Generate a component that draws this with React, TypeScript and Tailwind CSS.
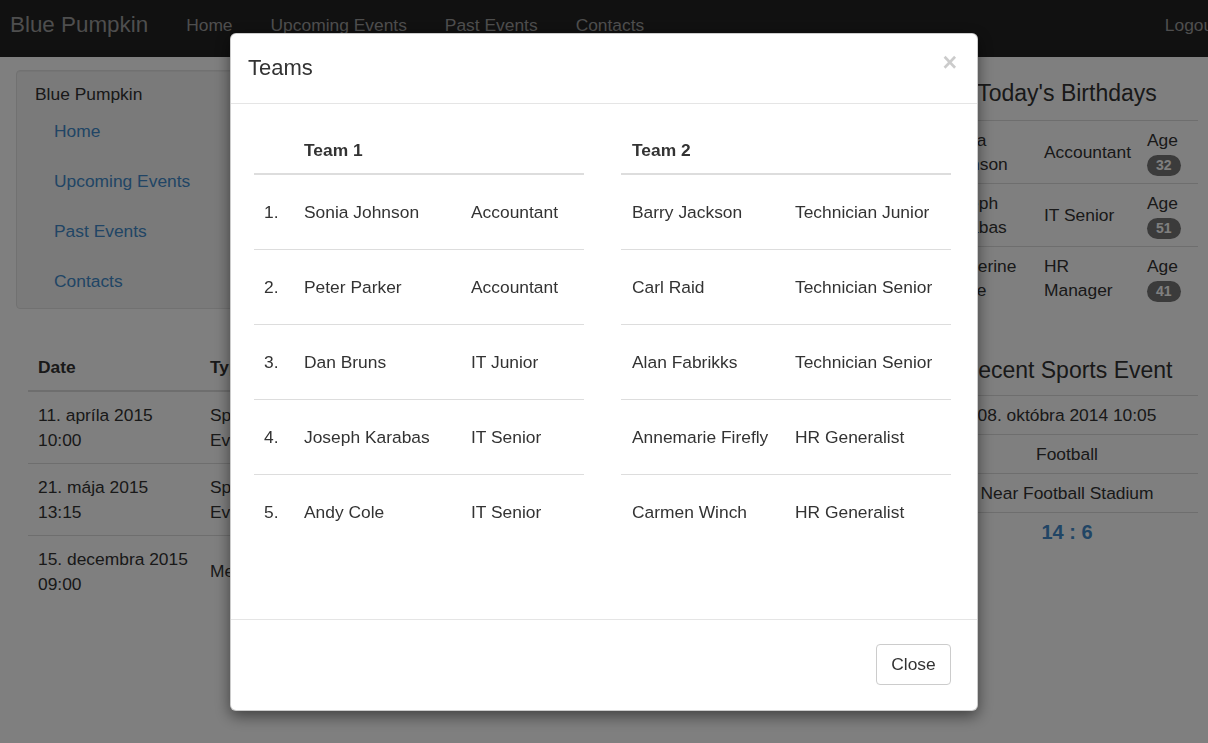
import React from "react";

const team1 = [
  { name: "Sonia Johnson", role: "Accountant" },
  { name: "Peter Parker", role: "Accountant" },
  { name: "Dan Bruns", role: "IT Junior" },
  { name: "Joseph Karabas", role: "IT Senior" },
  { name: "Andy Cole", role: "IT Senior" },
];

const team2 = [
  { name: "Barry Jackson", role: "Technician Junior" },
  { name: "Carl Raid", role: "Technician Senior" },
  { name: "Alan Fabrikks", role: "Technician Senior" },
  { name: "Annemarie Firefly", role: "HR Generalist" },
  { name: "Carmen Winch", role: "HR Generalist" },
];

const events = [
  { date: "11. apríla 2015", time: "10:00", type: "Sports Event" },
  { date: "21. mája 2015", time: "13:15", type: "Sports Event" },
  { date: "15. decembra 2015", time: "09:00", type: "Meeting" },
];

const birthdays = [
  { name: "Sonia Johnson", role: "Accountant", age: 32 },
  { name: "Joseph Karabas", role: "IT Senior", age: 51 },
  { name: "Katherine White", role: "HR Manager", age: 41 },
];

function Navbar() {
  return (
    <div className="flex h-[57px] items-start overflow-hidden bg-[#222] pt-[12px] text-[#9d9d9d]">
      <span className="ml-[10px] text-[22.4px] leading-[26px]">Blue Pumpkin</span>
      <nav className="ml-[38px] flex gap-[38px] pt-[1px] text-[17.4px] leading-[24px]">
        <a>Home</a>
        <a>Upcoming Events</a>
        <a>Past Events</a>
        <a>Contacts</a>
      </nav>
      <a className="ml-auto -mr-[10px] whitespace-nowrap pt-[1px] text-[17.4px] leading-[24px]">
        Logout
      </a>
    </div>
  );
}

function LeftColumn() {
  return (
    <div className="w-[600px] shrink-0">
      <div className="ml-[16px] mt-[13px] h-[239px] rounded-[4px] border border-[#e3e3e3] bg-[#f5f5f5] pt-[11px] shadow-[inset_0_1px_1px_rgba(0,0,0,0.05)]">
        <div className="pl-[18px] leading-[24px]">Blue Pumpkin</div>
        <ul className="pl-[37px] text-[#428bca]">
          {["Home", "Upcoming Events", "Past Events", "Contacts"].map((l) => (
            <li key={l} className="flex h-[50px] items-center">
              {l}
            </li>
          ))}
        </ul>
      </div>

      {/* events table — mostly covered by the modal */}
      <div className="ml-[28px] mt-[35px] w-[300px]">
        <div className="grid h-[48px] grid-cols-[172px_1fr] items-center border-b-2 border-[#ddd] font-bold">
          <span className="pl-[10px]">Date</span>
          <span className="pl-[10px]">Type</span>
        </div>
        {events.map((e, i) => (
          <div
            key={e.date}
            className={`grid grid-cols-[172px_1fr] items-center ${
              i === 0 ? "h-[71px]" : "h-[72px] border-t border-[#ddd]"
            }`}
          >
            <span className="pl-[10px]">
              {e.date}
              <br />
              {e.time}
            </span>
            <span className="w-[80px] pl-[10px]">{e.type}</span>
          </div>
        ))}
      </div>
    </div>
  );
}

function RightColumn() {
  return (
    <div className="ml-auto mr-[10px] w-[262px] shrink-0">
      <h3 className="pb-[14px] pt-[23px] text-center text-[23px] leading-[26px]">
        Today's Birthdays
      </h3>
      {birthdays.map((b) => (
        <div
          key={b.name}
          className="grid h-[63px] grid-cols-[100px_103px_59px] items-center border-t border-[#ddd]"
        >
          <span className="px-[6px]">{b.name}</span>
          <span className="px-[8px]">{b.role}</span>
          <span className="px-[8px]">
            Age
            <br />
            <span className="inline-flex h-[21px] items-center rounded-full bg-[#777] px-[9px] text-[14px] font-bold leading-none text-white">
              {b.age}
            </span>
          </span>
        </div>
      ))}

      <h3 className="pb-[12px] pt-[48px] text-center text-[23px] leading-[26px]">
        Recent Sports Event
      </h3>
      {["08. októbra 2014 10:05", "Football", "Near Football Stadium"].map((t) => (
        <div key={t} className="flex h-[39px] items-center justify-center border-t border-[#ddd]">
          {t}
        </div>
      ))}
      <div className="flex h-[39px] items-center justify-center border-t border-[#ddd] text-[20px] font-bold text-[#428bca]">
        14 : 6
      </div>
    </div>
  );
}

function TeamTable({
  title,
  rows,
  numbered,
}: {
  title: string;
  rows: { name: string; role: string }[];
  numbered: boolean;
}) {
  const cols = numbered ? "grid-cols-[40px_167px_123px]" : "grid-cols-[164px_166px]";
  return (
    <div className="w-[330px]">
      <div className={`grid h-[48px] items-center border-b-2 border-[#ddd] font-bold ${cols}`}>
        {numbered && <span />}
        <span className={numbered ? "pl-[10px]" : "pl-[11px]"}>{title}</span>
        <span />
      </div>
      {rows.map((r, i) => (
        <div
          key={r.name}
          className={`grid items-center ${cols} ${
            i === 0 ? "h-[74px]" : "h-[75px] border-t border-[#ddd]"
          }`}
        >
          {numbered && <span className="pl-[10px]">{i + 1}.</span>}
          <span className={numbered ? "pl-[10px]" : "pl-[11px]"}>{r.name}</span>
          <span className="pl-[10px]">{r.role}</span>
        </div>
      ))}
    </div>
  );
}

function TeamsModal() {
  return (
    <div className="fixed inset-0 bg-black/50">
      <div className="mx-auto mt-[33px] w-[748px] rounded-[6px] border border-black/20 bg-white shadow-[0_5px_15px_rgba(0,0,0,0.5)]">
        <div className="flex h-[70px] items-center justify-between border-b border-[#e5e5e5] pl-[17px] pr-[20px]">
          <h4 className="-mt-[2px] text-[22px] leading-[26px]">Teams</h4>
          <button className="-mt-[13px] text-[25px] font-bold leading-none text-black opacity-20">
            ×
          </button>
        </div>
        <div className="flex h-[515px] gap-[37px] pl-[23px] pt-[23px]">
          <TeamTable title="Team 1" rows={team1} numbered />
          <TeamTable title="Team 2" rows={team2} numbered={false} />
        </div>
        <div className="flex justify-end border-t border-[#e5e5e5] pb-[25px] pr-[26px] pt-[24px]">
          <button className="h-[41px] w-[75px] rounded-[4px] border border-[#ccc] bg-white leading-none">
            Close
          </button>
        </div>
      </div>
    </div>
  );
}

export default function App() {
  return (
    <div
      className="relative h-[743px] w-full overflow-hidden bg-white text-[17.4px] leading-[24.5px] text-[#333]"
      style={{ fontFamily: '"Liberation Sans", Arial, sans-serif' }}
    >
      <Navbar />
      <div className="flex">
        <LeftColumn />
        <RightColumn />
      </div>
      <TeamsModal />
    </div>
  );
}
